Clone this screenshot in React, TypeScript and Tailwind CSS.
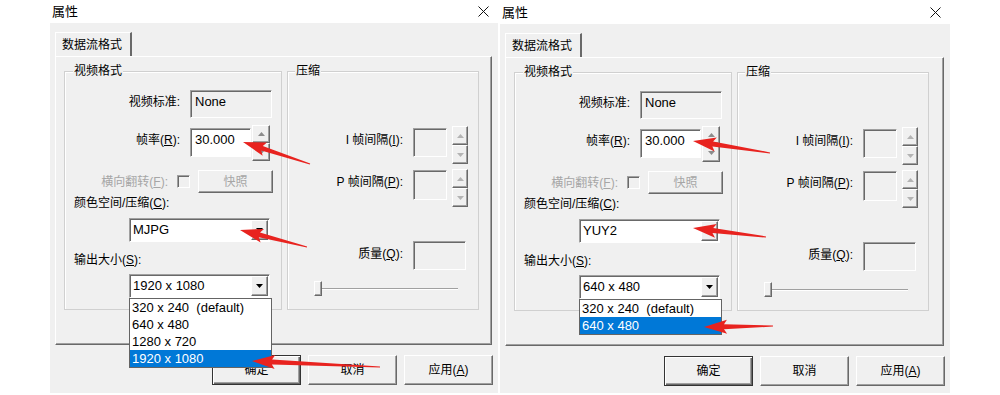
import React from "react";

const sunken =
  "border border-t-[#a0a0a0] border-l-[#a0a0a0] border-r-white border-b-white shadow-[inset_1px_1px_0_#696969]";
const raised =
  "border border-t-white border-l-white border-r-[#696969] border-b-[#696969] shadow-[inset_-1px_-1px_0_#a0a0a0]";
const label = "text-[12px] leading-[16px]";

function CloseIcon() {
  return (
    <svg width="11" height="11" viewBox="0 0 11 11">
      <path d="M0.5 0.5 L10.5 10.5 M10.5 0.5 L0.5 10.5" stroke="#111" strokeWidth="1" />
    </svg>
  );
}

function Tri({ up, color }: { up?: boolean; color: string }) {
  return (
    <svg width="7" height="4" viewBox="0 0 7 4">
      <path d={up ? "M0 4 L3.5 0 L7 4 Z" : "M0 0 L7 0 L3.5 4 Z"} fill={color} />
    </svg>
  );
}

function Spin({ small }: { small?: boolean }) {
  const btn = small
    ? `flex h-[19px] w-[16px] items-center justify-center bg-[#f0f0f0] ${raised}`
    : `flex h-[18px] w-[18px] items-center justify-center bg-[#f0f0f0] ${raised}`;
  const c = small ? "#b4b4b4" : "#8c8c8c";
  return (
    <div className="flex flex-col">
      <div className={btn}>
        <Tri up color={c} />
      </div>
      <div className={btn}>
        <Tri color={c} />
      </div>
    </div>
  );
}

function Combo({ value, children }: { value: string; children?: React.ReactNode }) {
  return (
    <div className="relative w-[141px]">
      <div className={`flex h-[24px] w-[141px] items-center bg-white ${sunken}`}>
        <span className="flex-1 pl-[3px] text-[13px] leading-[16px]">{value}</span>
        <div className={`mr-[1px] flex h-[20px] w-[17px] items-center justify-center bg-[#f0f0f0] ${raised}`}>
          <Tri color="#000" />
        </div>
      </div>
      {children}
    </div>
  );
}

type DialogProps = {
  width: string;
  color: string;
  size: string;
  options: string[];
  selected: number;
  lower?: boolean;
};

function Dialog({ width, color, size, options, selected, lower }: DialogProps) {
  return (
    <div className={`flex h-[393px] flex-col ${width} ${lower ? "pt-[1px]" : ""}`}>
      <div className="flex h-[23px] shrink-0 items-center justify-between bg-white pl-[2px] pr-[9px]">
        <span className="text-[13px] leading-[16px]">属性</span>
        <CloseIcon />
      </div>
      <div className="flex flex-1 flex-col bg-[#f0f0f0] pl-[5px] pr-[6px] pt-[9px]">
        <div className="flex h-[24px] w-[77px] items-center border-l border-t border-r-2 border-l-white border-t-white border-r-[#696969] pl-[6px] text-[12px]">
          数据流格式
        </div>
        <div className={`flex h-[289px] items-start gap-[5px] pl-[8px] pt-[6px] ${raised}`}>
          {/* 视频格式 */}
          <fieldset className="h-[247px] w-[218px] min-w-0 border border-[#d0d0d0] shadow-[inset_1px_1px_0_#fff]">
            <legend className={`ml-[8px] bg-[#f0f0f0] px-[1px] ${label}`}>视频格式</legend>
            <div className="flex flex-col">
              <div className="mt-[11px] flex items-start">
                <span className={`mt-[4px] w-[115px] text-right ${label}`}>视频标准:</span>
                <div className={`ml-[10px] h-[28px] w-[82px] pl-[4px] pt-[3px] text-[13px] leading-[16px] ${sunken}`}>None</div>
              </div>
              <div className="mt-[7px] flex items-start">
                <span className={`mt-[7px] w-[115px] text-right ${label}`}>
                  帧率(<u>R</u>):
                </span>
                <div className={`ml-[10px] mt-[3px] h-[29px] w-[61px] bg-white pl-[4px] pt-[3px] text-[13px] leading-[16px] ${sunken}`}>
                  30.000
                </div>
                <div className="ml-[1px]">
                  <Spin />
                </div>
              </div>
              <div className="mt-[9px] flex items-center">
                <span className={`w-[103px] text-right text-[#a6a6a6] ${label}`}>
                  横向翻转(<u>F</u>):
                </span>
                <div className={`ml-[9px] h-[13px] w-[13px] bg-[#f0f0f0] ${sunken}`} />
                <div className={`ml-[8px] flex h-[23px] w-[75px] items-center justify-center text-[#a6a6a6] ${label} ${raised}`}>
                  快照
                </div>
              </div>
              <span className={`ml-[9px] mt-[2px] ${label}`}>
                颜色空间/压缩(<u>C</u>):
              </span>
              <div className="ml-[64px] mt-[7px]">
                <Combo value={color} />
              </div>
              <span className={`ml-[9px] mt-[10px] ${label}`}>
                输出大小(<u>S</u>):
              </span>
              <div className="ml-[64px] mt-[6px]">
                <Combo value={size}>
                  <div className="absolute left-0 top-full z-10 w-[143px] border border-[#646464] bg-white">
                    {options.map((o, i) => (
                      <div
                        key={o}
                        className={`h-[17px] whitespace-pre pl-[2px] text-[13px] leading-[17px] ${
                          i === selected ? "bg-[#0078d7] text-white" : ""
                        }`}
                      >
                        {o}
                      </div>
                    ))}
                  </div>
                </Combo>
              </div>
            </div>
          </fieldset>

          {/* 压缩 */}
          <fieldset className="h-[247px] w-[192px] min-w-0 border border-[#d0d0d0] shadow-[inset_1px_1px_0_#fff]">
            <legend className={`ml-[7px] bg-[#f0f0f0] px-[1px] ${label}`}>压缩</legend>
            <div className="flex flex-col">
              <div className="mt-[47px] flex items-start">
                <span className={`mt-[6px] w-[115px] text-right ${label}`}>
                  I 帧间隔(<u>I</u>):
                </span>
                <div className={`ml-[10px] mt-[2px] h-[29px] w-[34px] ${sunken}`} />
                <div className="ml-[5px]">
                  <Spin small />
                </div>
              </div>
              <div className="mt-[5px] flex items-start">
                <span className={`mt-[5px] w-[115px] text-right ${label}`}>
                  P 帧间隔(<u>P</u>):
                </span>
                <div className={`ml-[10px] mt-[1px] h-[30px] w-[34px] ${sunken}`} />
                <div className="ml-[5px]">
                  <Spin small />
                </div>
              </div>
              <div className="mt-[34px] flex items-start">
                <span className={`mt-[5px] w-[115px] text-right ${label}`}>
                  质量(<u>Q</u>):
                </span>
                <div className={`ml-[10px] h-[29px] w-[53px] ${sunken}`} />
              </div>
              <div className="ml-[26px] mt-[11px] flex items-center">
                <div className={`h-[15px] w-[8px] bg-[#f0f0f0] ${raised}`} />
                <div className="h-[2px] w-[136px] border-b border-t border-b-white border-t-[#a0a0a0]" />
              </div>
            </div>
          </fieldset>
        </div>
        <div className="-mr-[1px] mt-[10px] flex justify-end gap-[7px]">
          <div className="flex h-[30px] w-[89px] items-center justify-center border border-[#333] bg-[#f0f0f0] text-[12px] shadow-[inset_1px_1px_0_#fff,inset_-1px_-1px_0_#696969,inset_-2px_-2px_0_#a0a0a0]">
            确定
          </div>
          <div className={`flex h-[30px] w-[89px] items-center justify-center bg-[#f0f0f0] text-[12px] ${raised}`}>取消</div>
          <div className={`flex h-[30px] w-[89px] items-center justify-center bg-[#f0f0f0] text-[12px] ${raised}`}>
            应用(<u>A</u>)
          </div>
        </div>
      </div>
    </div>
  );
}

function arrowPoints(tx: number, ty: number, sx: number, sy: number) {
  const dx = tx - sx;
  const dy = ty - sy;
  const len = Math.hypot(dx, dy);
  const ux = dx / len;
  const uy = dy / len;
  const nx = -uy;
  const ny = ux;
  const head = 20;
  const barb = 7;
  const neck = 2.5;
  const tail = 0.6;
  const bx = tx - ux * head;
  const by = ty - uy * head;
  const cx = tx - ux * (head + 3);
  const cy = ty - uy * (head + 3);
  const pts = [
    [sx + nx * tail, sy + ny * tail],
    [bx + nx * neck, by + ny * neck],
    [cx + nx * barb, cy + ny * barb],
    [tx, ty],
    [cx - nx * barb, cy - ny * barb],
    [bx - nx * neck, by - ny * neck],
    [sx - nx * tail, sy - ny * tail],
  ];
  return pts.map((p) => `${p[0].toFixed(1)},${p[1].toFixed(1)}`).join(" ");
}

const ARROWS: [number, number, number, number][] = [
  [243, 142, 310, 164],
  [240, 230, 307, 247],
  [252, 361, 380, 367],
  [693, 141, 770, 153],
  [693, 228, 766, 237],
  [704, 327, 773, 326],
];

export default function App() {
  return (
    <div className="relative flex h-[395px] w-[1000px] gap-[2px] overflow-hidden bg-white pl-[50px] font-['Liberation_Sans','Noto_Sans_CJK_SC',sans-serif] text-black">
      <Dialog
        width="w-[448px]"
        color="MJPG"
        size="1920 x 1080"
        options={["320 x 240  (default)", "640 x 480", "1280 x 720", "1920 x 1080"]}
        selected={3}
      />
      <Dialog
        width="w-[450px]"
        color="YUY2"
        size="640 x 480"
        options={["320 x 240  (default)", "640 x 480"]}
        selected={1}
        lower
      />
      <svg className="pointer-events-none absolute left-0 top-0 z-20" width="1000" height="395">
        {ARROWS.map((a, i) => (
          <polygon key={i} points={arrowPoints(a[0], a[1], a[2], a[3])} fill="#e8231f" />
        ))}
      </svg>
    </div>
  );
}
